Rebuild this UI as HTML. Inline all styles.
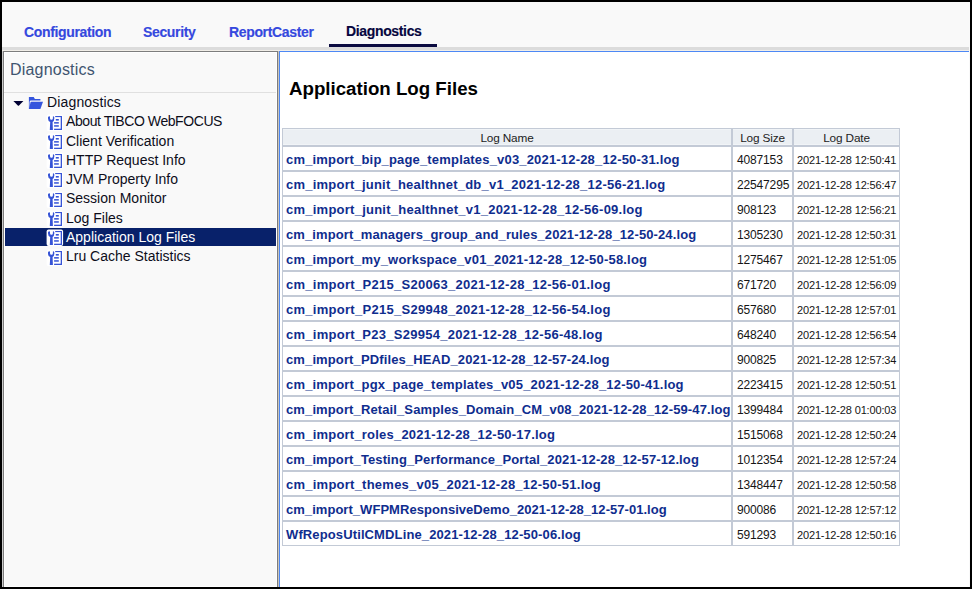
<!DOCTYPE html>
<html><head><meta charset="utf-8">
<style>
*{box-sizing:border-box;margin:0;padding:0}
html,body{width:972px;height:589px;overflow:hidden;background:#000}
body{font-family:"Liberation Sans",sans-serif;position:relative}
div,svg,h1,table{position:absolute}
#bg{left:2px;top:2px;width:968px;height:585px;background:#f9f9f9}
.tab{top:25px;font-weight:bold;font-size:14px;line-height:14px;color:#3548de;white-space:nowrap;letter-spacing:-0.35px;-webkit-text-stroke:0.15px currentColor}
#t1{left:24px}#t2{left:143px}#t3{left:229px}#t4{left:346px;top:24px;color:#06063e}
#tabbar{left:329px;top:44px;width:108px;height:3px;background:#0b0b40}
#band{left:2px;top:47px;width:967px;height:3px;background:#dcdcdc;border-bottom:none}
#band2{left:2px;top:50px;width:967px;height:1px;background:#f1eee8}
#left{left:3px;top:51px;width:275px;height:536px;border:1px solid #7d7d7d;border-bottom:none;background:#f9f9f9;box-shadow:inset 1px 1px 0 #fff,inset -1px -1px 0 #fff}
#lefthdr{left:10px;top:62px;font-size:16px;line-height:16px;color:#3f5570;letter-spacing:0.2px;white-space:nowrap}
#leftsep{left:4px;top:92px;width:272px;height:1px;background:#e0e0e0}
#splitter{left:278px;top:51px;width:1px;height:536px;background:#cbc6bc}
#right{left:279px;top:51px;width:690px;height:536px;background:#fff;border-left:1px solid #4d88f5;border-top:1px solid #4d88f5}
.ti{font-size:14px;line-height:14px;color:#0d0d1a;white-space:nowrap}
.ti.w{color:#fff}
.sel{left:5px;width:271px;height:18px;background:#08216a}
h1{left:289px;top:79px;font-size:18.7px;line-height:20px;font-weight:bold;color:#000;white-space:nowrap}
table{left:282px;top:128px;border-collapse:separate;border-spacing:0}
td,th{border:1px solid #c3cad6;}
th{height:18px;background:#ebeff3;box-shadow:inset 0 1px 0 #f1f4f7,inset 0 -1px 0 #f1f4f7;font-weight:normal;font-size:11.8px;line-height:14px;color:#222;text-align:center;padding:2px 0 0 0;vertical-align:top;letter-spacing:-0.15px}
td{height:25px;font-size:12px;color:#151515;padding:2px 0 0 4px;white-space:nowrap;line-height:14px}
td a{color:#0f2d8e;font-weight:bold;font-size:13px;text-decoration:none;letter-spacing:0.12px}
td:first-child{padding-left:3px;padding-top:2px}
td.s{letter-spacing:-0.15px}
td.d{font-size:11px;padding-left:3px;letter-spacing:-0.15px}

#lcol{left:2px;top:51px;width:1px;height:536px;background:#cccccc}

</style></head><body>
<div id="bg"></div>
<div class="tab" id="t1">Configuration</div>
<div class="tab" id="t2">Security</div>
<div class="tab" id="t3">ReportCaster</div>
<div class="tab" id="t4">Diagnostics</div>
<div id="tabbar"></div>
<div id="band"></div>
<div id="band2"></div>
<div id="left"></div>
<div id="lcol"></div>
<div id="lefthdr">Diagnostics</div>
<div id="leftsep"></div>
<svg style="position:absolute;left:12px;top:99px" width="13" height="8" viewBox="0 0 13 8"><path d="M1.4 1.9 L11.4 1.9 L7.0 6.5 Q6.4 7.1 5.8 6.5 Z" fill="#000033"/></svg>
<svg style="position:absolute;left:27px;top:95px" width="18" height="16" viewBox="0 0 18 16"><g fill="#3555dd"><path d="M1.9 1.9 L6.7 1.9 L7.9 3.9 L13.4 3.9 L13.4 5.6 L3.6 5.6 Q2.6 5.8 2.6 7 L2.6 13.3 L1.9 13.9 Z"/><path d="M4.3 6.7 L16 6.7 L13.4 13.9 L1.9 13.9 L3.5 7.4 Q3.7 6.7 4.3 6.7 Z"/></g></svg>
<div class="ti" style="left:47px;top:95px;letter-spacing:0.15px">Diagnostics</div>
<svg class="ic" style="left:46px;top:114px" width="18" height="18" viewBox="0 0 18 18"><rect x="0.6" y="0.6" width="16.5" height="16.5" rx="2" fill="#fff"/><g fill="#3553d6"><path d="M2.0 3.2 L2.9 2.2 L4.0 2.6 L4.0 4.2 Q4.0 5.7 5.45 5.7 Q6.9 5.7 6.9 4.2 L6.9 2.6 L7.6 2.2 L8.3 3.2 L8.3 4.6 Q8.3 7.3 6.6 7.9 L6.9 16 L3.8 16 L4.2 7.9 Q2.0 7.3 2.0 4.6 Z"/><rect x="9.2" y="2" width="6.8" height="1.1"/><rect x="14.7" y="2" width="1.3" height="14"/><rect x="8.1" y="14.7" width="7.9" height="1.3"/><rect x="9.8" y="5" width="3" height="1.6"/><rect x="8.1" y="8.1" width="4.7" height="1.5"/><rect x="8.1" y="11.2" width="4.7" height="1.5"/></g></svg>
<div class="ti" style="left:66px;top:114px;letter-spacing:-0.42px">About TIBCO WebFOCUS</div>
<svg class="ic" style="left:46px;top:133px" width="18" height="18" viewBox="0 0 18 18"><rect x="0.6" y="0.6" width="16.5" height="16.5" rx="2" fill="#fff"/><g fill="#3553d6"><path d="M2.0 3.2 L2.9 2.2 L4.0 2.6 L4.0 4.2 Q4.0 5.7 5.45 5.7 Q6.9 5.7 6.9 4.2 L6.9 2.6 L7.6 2.2 L8.3 3.2 L8.3 4.6 Q8.3 7.3 6.6 7.9 L6.9 16 L3.8 16 L4.2 7.9 Q2.0 7.3 2.0 4.6 Z"/><rect x="9.2" y="2" width="6.8" height="1.1"/><rect x="14.7" y="2" width="1.3" height="14"/><rect x="8.1" y="14.7" width="7.9" height="1.3"/><rect x="9.8" y="5" width="3" height="1.6"/><rect x="8.1" y="8.1" width="4.7" height="1.5"/><rect x="8.1" y="11.2" width="4.7" height="1.5"/></g></svg>
<div class="ti" style="left:66px;top:134px">Client Verification</div>
<svg class="ic" style="left:46px;top:152px" width="18" height="18" viewBox="0 0 18 18"><rect x="0.6" y="0.6" width="16.5" height="16.5" rx="2" fill="#fff"/><g fill="#3553d6"><path d="M2.0 3.2 L2.9 2.2 L4.0 2.6 L4.0 4.2 Q4.0 5.7 5.45 5.7 Q6.9 5.7 6.9 4.2 L6.9 2.6 L7.6 2.2 L8.3 3.2 L8.3 4.6 Q8.3 7.3 6.6 7.9 L6.9 16 L3.8 16 L4.2 7.9 Q2.0 7.3 2.0 4.6 Z"/><rect x="9.2" y="2" width="6.8" height="1.1"/><rect x="14.7" y="2" width="1.3" height="14"/><rect x="8.1" y="14.7" width="7.9" height="1.3"/><rect x="9.8" y="5" width="3" height="1.6"/><rect x="8.1" y="8.1" width="4.7" height="1.5"/><rect x="8.1" y="11.2" width="4.7" height="1.5"/></g></svg>
<div class="ti" style="left:66px;top:153px">HTTP Request Info</div>
<svg class="ic" style="left:46px;top:171px" width="18" height="18" viewBox="0 0 18 18"><rect x="0.6" y="0.6" width="16.5" height="16.5" rx="2" fill="#fff"/><g fill="#3553d6"><path d="M2.0 3.2 L2.9 2.2 L4.0 2.6 L4.0 4.2 Q4.0 5.7 5.45 5.7 Q6.9 5.7 6.9 4.2 L6.9 2.6 L7.6 2.2 L8.3 3.2 L8.3 4.6 Q8.3 7.3 6.6 7.9 L6.9 16 L3.8 16 L4.2 7.9 Q2.0 7.3 2.0 4.6 Z"/><rect x="9.2" y="2" width="6.8" height="1.1"/><rect x="14.7" y="2" width="1.3" height="14"/><rect x="8.1" y="14.7" width="7.9" height="1.3"/><rect x="9.8" y="5" width="3" height="1.6"/><rect x="8.1" y="8.1" width="4.7" height="1.5"/><rect x="8.1" y="11.2" width="4.7" height="1.5"/></g></svg>
<div class="ti" style="left:66px;top:172px">JVM Property Info</div>
<svg class="ic" style="left:46px;top:191px" width="18" height="18" viewBox="0 0 18 18"><rect x="0.6" y="0.6" width="16.5" height="16.5" rx="2" fill="#fff"/><g fill="#3553d6"><path d="M2.0 3.2 L2.9 2.2 L4.0 2.6 L4.0 4.2 Q4.0 5.7 5.45 5.7 Q6.9 5.7 6.9 4.2 L6.9 2.6 L7.6 2.2 L8.3 3.2 L8.3 4.6 Q8.3 7.3 6.6 7.9 L6.9 16 L3.8 16 L4.2 7.9 Q2.0 7.3 2.0 4.6 Z"/><rect x="9.2" y="2" width="6.8" height="1.1"/><rect x="14.7" y="2" width="1.3" height="14"/><rect x="8.1" y="14.7" width="7.9" height="1.3"/><rect x="9.8" y="5" width="3" height="1.6"/><rect x="8.1" y="8.1" width="4.7" height="1.5"/><rect x="8.1" y="11.2" width="4.7" height="1.5"/></g></svg>
<div class="ti" style="left:66px;top:191px">Session Monitor</div>
<svg class="ic" style="left:46px;top:210px" width="18" height="18" viewBox="0 0 18 18"><rect x="0.6" y="0.6" width="16.5" height="16.5" rx="2" fill="#fff"/><g fill="#3553d6"><path d="M2.0 3.2 L2.9 2.2 L4.0 2.6 L4.0 4.2 Q4.0 5.7 5.45 5.7 Q6.9 5.7 6.9 4.2 L6.9 2.6 L7.6 2.2 L8.3 3.2 L8.3 4.6 Q8.3 7.3 6.6 7.9 L6.9 16 L3.8 16 L4.2 7.9 Q2.0 7.3 2.0 4.6 Z"/><rect x="9.2" y="2" width="6.8" height="1.1"/><rect x="14.7" y="2" width="1.3" height="14"/><rect x="8.1" y="14.7" width="7.9" height="1.3"/><rect x="9.8" y="5" width="3" height="1.6"/><rect x="8.1" y="8.1" width="4.7" height="1.5"/><rect x="8.1" y="11.2" width="4.7" height="1.5"/></g></svg>
<div class="ti" style="left:66px;top:211px">Log Files</div>
<div class="sel" style="top:228px"></div>
<svg class="ic" style="left:46px;top:229px" width="18" height="18" viewBox="0 0 18 18"><rect x="0.6" y="0.6" width="16.5" height="16.5" rx="2" fill="#fff"/><g fill="#3553d6"><path d="M2.0 3.2 L2.9 2.2 L4.0 2.6 L4.0 4.2 Q4.0 5.7 5.45 5.7 Q6.9 5.7 6.9 4.2 L6.9 2.6 L7.6 2.2 L8.3 3.2 L8.3 4.6 Q8.3 7.3 6.6 7.9 L6.9 16 L3.8 16 L4.2 7.9 Q2.0 7.3 2.0 4.6 Z"/><rect x="9.2" y="2" width="6.8" height="1.1"/><rect x="14.7" y="2" width="1.3" height="14"/><rect x="8.1" y="14.7" width="7.9" height="1.3"/><rect x="9.8" y="5" width="3" height="1.6"/><rect x="8.1" y="8.1" width="4.7" height="1.5"/><rect x="8.1" y="11.2" width="4.7" height="1.5"/></g></svg>
<div class="ti w" style="left:66px;top:230px">Application Log Files</div>
<svg class="ic" style="left:46px;top:249px" width="18" height="18" viewBox="0 0 18 18"><rect x="0.6" y="0.6" width="16.5" height="16.5" rx="2" fill="#fff"/><g fill="#3553d6"><path d="M2.0 3.2 L2.9 2.2 L4.0 2.6 L4.0 4.2 Q4.0 5.7 5.45 5.7 Q6.9 5.7 6.9 4.2 L6.9 2.6 L7.6 2.2 L8.3 3.2 L8.3 4.6 Q8.3 7.3 6.6 7.9 L6.9 16 L3.8 16 L4.2 7.9 Q2.0 7.3 2.0 4.6 Z"/><rect x="9.2" y="2" width="6.8" height="1.1"/><rect x="14.7" y="2" width="1.3" height="14"/><rect x="8.1" y="14.7" width="7.9" height="1.3"/><rect x="9.8" y="5" width="3" height="1.6"/><rect x="8.1" y="8.1" width="4.7" height="1.5"/><rect x="8.1" y="11.2" width="4.7" height="1.5"/></g></svg>
<div class="ti" style="left:66px;top:249px">Lru Cache Statistics</div>
<div id="splitter"></div>
<div id="right"></div>
<h1>Application Log Files</h1>
<table>
<tr><th style="width:450px">Log Name</th><th style="width:61px">Log Size</th><th style="width:107px">Log Date</th></tr>
<tr><td><a style="letter-spacing:0.178px">cm_import_bip_page_templates_v03_2021-12-28_12-50-31.log</a></td><td class="s">4087153</td><td class="d">2021-12-28 12:50:41</td></tr>
<tr><td><a style="letter-spacing:0.224px">cm_import_junit_healthnet_db_v1_2021-12-28_12-56-21.log</a></td><td class="s">22547295</td><td class="d">2021-12-28 12:56:47</td></tr>
<tr><td><a style="letter-spacing:0.245px">cm_import_junit_healthnet_v1_2021-12-28_12-56-09.log</a></td><td class="s">908123</td><td class="d">2021-12-28 12:56:21</td></tr>
<tr><td><a style="letter-spacing:0.109px">cm_import_managers_group_and_rules_2021-12-28_12-50-24.log</a></td><td class="s">1305230</td><td class="d">2021-12-28 12:50:31</td></tr>
<tr><td><a style="letter-spacing:0.184px">cm_import_my_workspace_v01_2021-12-28_12-50-58.log</a></td><td class="s">1275467</td><td class="d">2021-12-28 12:51:05</td></tr>
<tr><td><a style="letter-spacing:0.277px">cm_import_P215_S20063_2021-12-28_12-56-01.log</a></td><td class="s">671720</td><td class="d">2021-12-28 12:56:09</td></tr>
<tr><td><a style="letter-spacing:0.277px">cm_import_P215_S29948_2021-12-28_12-56-54.log</a></td><td class="s">657680</td><td class="d">2021-12-28 12:57:01</td></tr>
<tr><td><a style="letter-spacing:0.267px">cm_import_P23_S29954_2021-12-28_12-56-48.log</a></td><td class="s">648240</td><td class="d">2021-12-28 12:56:54</td></tr>
<tr><td><a style="letter-spacing:0.122px">cm_import_PDfiles_HEAD_2021-12-28_12-57-24.log</a></td><td class="s">900825</td><td class="d">2021-12-28 12:57:34</td></tr>
<tr><td><a style="letter-spacing:0.185px">cm_import_pgx_page_templates_v05_2021-12-28_12-50-41.log</a></td><td class="s">2223415</td><td class="d">2021-12-28 12:50:51</td></tr>
<tr><td><a style="letter-spacing:0.12px">cm_import_Retail_Samples_Domain_CM_v08_2021-12-28_12-59-47.log</a></td><td class="s">1399484</td><td class="d">2021-12-28 01:00:03</td></tr>
<tr><td><a style="letter-spacing:0.213px">cm_import_roles_2021-12-28_12-50-17.log</a></td><td class="s">1515068</td><td class="d">2021-12-28 12:50:24</td></tr>
<tr><td><a style="letter-spacing:0.119px">cm_import_Testing_Performance_Portal_2021-12-28_12-57-12.log</a></td><td class="s">1012354</td><td class="d">2021-12-28 12:57:24</td></tr>
<tr><td><a style="letter-spacing:0.242px">cm_import_themes_v05_2021-12-28_12-50-51.log</a></td><td class="s">1348447</td><td class="d">2021-12-28 12:50:58</td></tr>
<tr><td><a style="letter-spacing:0.041px">cm_import_WFPMResponsiveDemo_2021-12-28_12-57-01.log</a></td><td class="s">900086</td><td class="d">2021-12-28 12:57:12</td></tr>
<tr><td><a style="letter-spacing:0.122px">WfReposUtilCMDLine_2021-12-28_12-50-06.log</a></td><td class="s">591293</td><td class="d">2021-12-28 12:50:16</td></tr>
</table>
</body></html>
